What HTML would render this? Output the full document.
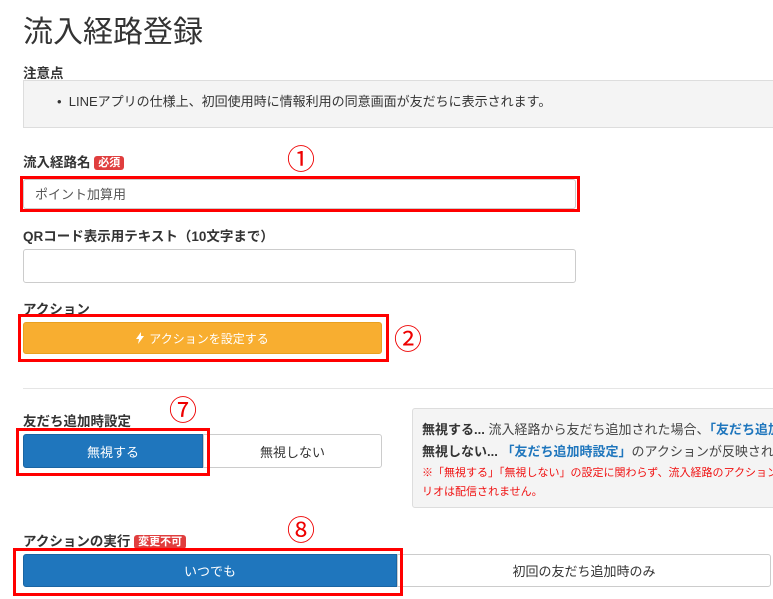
<!DOCTYPE html>
<html style="overflow:hidden"><head><meta charset="utf-8"><style>
html,body{overflow:hidden}
body{margin:0;width:773px;height:599px;background:#fff;position:relative;font-family:"Liberation Sans","Noto Sans CJK JP",sans-serif;color:#333}
.a{position:absolute;white-space:nowrap}
.lbl{font-size:13.5px;font-weight:bold;color:#333}
.badge{background:#e03e3e;color:#fff;font-size:11px;font-weight:bold;border-radius:3px;padding:1px 4px;line-height:15px;vertical-align:1px}
.red{position:absolute;border:3px solid #f00;box-sizing:border-box}
.inp{position:absolute;border:1px solid #ccc;border-radius:3px;box-sizing:border-box;background:#fff}
.num{position:absolute;color:#e00;font-size:28px;line-height:28px;font-family:"Noto Sans CJK JP",sans-serif}
.btn{position:absolute;box-sizing:border-box;font-size:13px;display:flex;align-items:center;justify-content:center}
.clip{position:absolute;left:0;top:0;width:773px;height:599px;overflow:hidden}
</style></head><body><div class="clip">
<div class="a" style="left:23px;top:14px;font-size:30px;color:#333;line-height:38px">流入経路登録</div>
<div class="a lbl" style="left:23px;top:62px">注意点</div>
<div style="position:absolute;left:23px;top:80px;width:760px;height:48px;background:#f4f4f4;border:1px solid #ddd;box-sizing:border-box"></div>
<div class="a" style="left:57px;top:91px;font-size:13px;color:#333">•&nbsp;&nbsp;LINEアプリの仕様上、初回使用時に情報利用の同意画面が友だちに表示されます。</div>

<div class="a lbl" style="left:23px;top:151px">流入経路名 <span class="badge">必須</span></div>
<div class="num" style="left:287px;top:144px">①</div>
<div class="inp" style="left:23px;top:179px;width:553px;height:30px"></div>
<div class="red" style="left:20px;top:176px;width:560px;height:36px"></div>
<div class="a" style="left:35px;top:184px;font-size:13px;color:#555">ポイント加算用</div>

<div class="a lbl" style="left:23px;top:225px">QRコード表示用テキスト（10文字まで）</div>
<div class="inp" style="left:23px;top:249px;width:553px;height:34px"></div>

<div class="a lbl" style="left:23px;top:298px">アクション</div>
<div class="btn" style="left:23px;top:322px;width:359px;height:32px;background:#f8ae30;border:1px solid #e9a020;border-radius:3px;color:#fff;font-size:12px"><svg width="8" height="12" viewBox="0 0 8 12" style="margin-right:5px"><path d="M5 0L0 7h3l-1 5 6-8H5z" fill="#fff"/></svg>アクションを設定する</div>
<div class="red" style="left:18px;top:314px;width:371px;height:48px"></div>
<div class="num" style="left:394px;top:324px">②</div>

<div style="position:absolute;left:23px;top:388px;width:750px;height:1px;background:#e5e5e5"></div>

<div class="a lbl" style="left:23px;top:410px">友だち追加時設定</div>
<div class="num" style="left:169px;top:395px">⑦</div>
<div class="btn" style="left:203px;top:434px;width:179px;height:34px;border:1px solid #ccc;border-radius:0 3px 3px 0;color:#333">無視しない</div>
<div class="btn" style="left:23px;top:434px;width:180px;height:34px;background:#1f76bd;border:1px solid #1a65a3;border-radius:3px 0 0 3px;color:#fff">無視する</div>
<div class="red" style="left:16px;top:428px;width:194px;height:48px"></div>

<div style="position:absolute;left:412px;top:408px;width:370px;height:100px;background:#f4f4f4;border:1px solid #ddd;border-radius:3px;box-sizing:border-box"></div>
<div class="a" style="left:422px;top:419px;font-size:13px;color:#444"><b style="color:#333">無視する...</b> 流入経路から友だち追加された場合、<b style="color:#1f76bd">「友だち追加時設定」</b></div>
<div class="a" style="left:422px;top:441px;font-size:13px;color:#444"><b style="color:#333">無視しない...</b> <b style="color:#1f76bd">「友だち追加時設定」</b>のアクションが反映されます</div>
<div class="a" style="left:422px;top:464px;font-size:11px;color:#f01010">※「無視する」「無視しない」の設定に関わらず、流入経路のアクション</div>
<div class="a" style="left:422px;top:483px;font-size:11px;color:#f01010">リオは配信されません。</div>

<div class="a lbl" style="left:23px;top:530px">アクションの実行 <span class="badge">変更不可</span></div>
<div class="num" style="left:287px;top:515px">⑧</div>
<div class="btn" style="left:397px;top:554px;width:374px;height:33px;border:1px solid #ccc;border-radius:0 3px 3px 0;color:#333">初回の友だち追加時のみ</div>
<div class="btn" style="left:23px;top:554px;width:374px;height:33px;background:#1f76bd;border:1px solid #1a65a3;border-radius:3px 0 0 3px;color:#fff">いつでも</div>
<div class="red" style="left:13px;top:548px;width:390px;height:48px"></div>
</div></body></html>
